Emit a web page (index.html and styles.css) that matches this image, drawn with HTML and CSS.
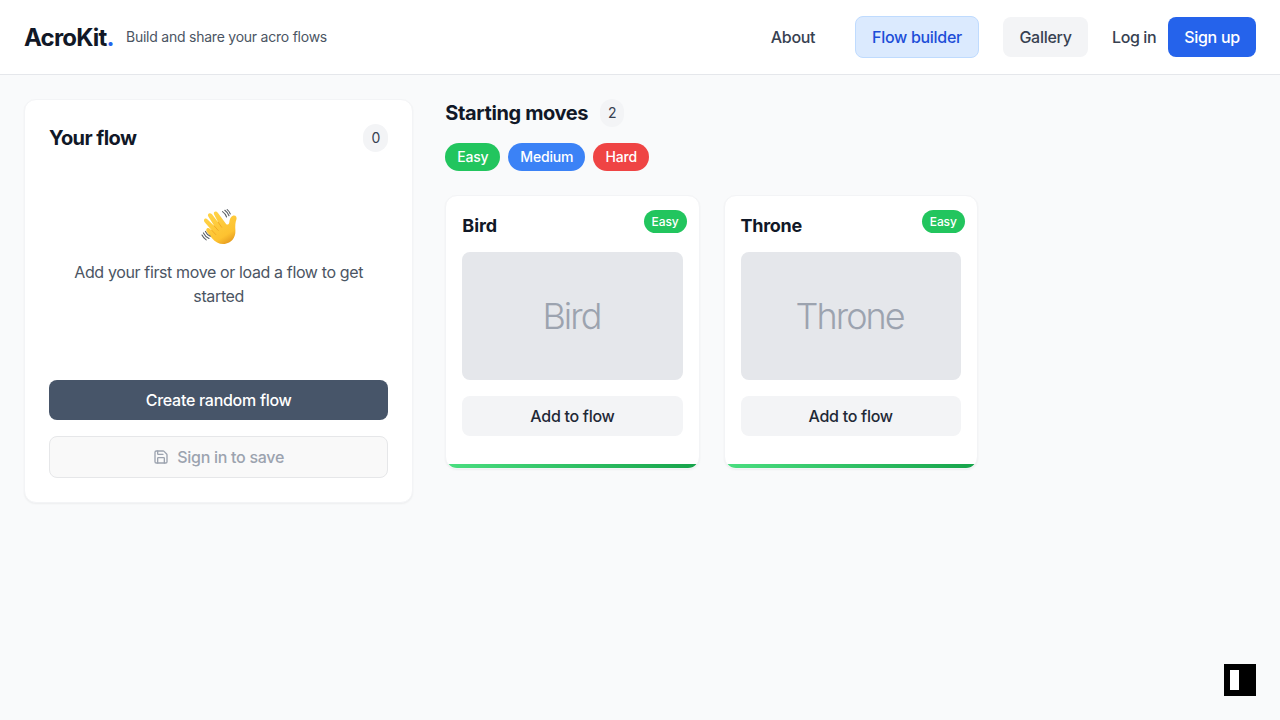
FILE: index.html
```html
<!DOCTYPE html>
<html lang="en">
<head>
<meta charset="utf-8">
<title>AcroKit</title>
<link rel="stylesheet" href="styles.css">
</head>
<body>
<header class="header">
  <div class="brand">
    <div class="logo"><span class="logo-name">AcroKit</span><span class="logo-dot">.</span></div>
    <div class="tagline">Build and share your acro flows</div>
  </div>
  <nav class="nav">
    <a class="nav-link about"><span>About</span></a>
    <a class="nav-link active"><span>Flow builder</span></a>
    <a class="nav-link gallery"><span>Gallery</span></a>
    <div class="account">
      <a class="login">Log in</a>
      <a class="signup"><span>Sign up</span></a>
    </div>
  </nav>
</header>
<main class="layout">
  <section class="panel">
    <div class="panel-head"><h2 class="heading flow-title">Your flow</h2><span class="count">0</span></div>
    <div class="empty">
      <svg class="wave" width="40" height="40" viewBox="0 0 40 40">
        <defs>
          <linearGradient id="skin" gradientUnits="userSpaceOnUse" x1="12" y1="8" x2="31" y2="38">
            <stop offset="0" stop-color="#ffd246"/><stop offset=".7" stop-color="#fdc230"/><stop offset="1" stop-color="#e0921c"/>
          </linearGradient>
        </defs>
        <path d="M13 31.2 7.9 24.9C6.1 22.6 8.4 19.8 10.8 21.7L12.9 23.4 5.7 15.2C3.7 12.7 6.3 10.3 8.6 12.4L15.3 19 9.3 9.6C7.8 6.8 10.9 4.9 13 7.3L19.3 15.4 15.1 7.6C13.8 4.8 17 3.3 18.8 5.7L27.3 17.2C28.7 18.3 30.1 17 30.3 15.2 30.6 12.1 31.7 9.2 34.3 8.5 36.8 7.9 38.2 10.3 37.4 12.6 36.3 15.6 36.1 18.7 36.4 23.6 36.8 31 32.1 36.2 25.8 36.9 20.7 37.5 16.5 35.2 13 31.2Z" fill="url(#skin)"/>
        <path d="m12.9 23.4 3.9 4.2M15.3 19l4 4.5M19.3 15.4l3.4 4.9" fill="none" stroke="#eda222" stroke-width=".8" stroke-linecap="round"/>
        <path d="M23.5 4.6c2 1.3 3.4 3.2 4.1 5.4M25.8 3.3c2 1.4 3.4 3.2 4.2 5.4M28.2 2.6c1.4 1.1 2.5 2.6 3.1 4.4M6.4 24.4c1.1 2.2 2.8 3.9 4.9 4.9M4.4 25.9c1.3 2.5 3.2 4.5 5.6 5.6M3 28.1c1 2.1 2.4 3.7 4.2 4.8" fill="none" stroke="#5b6067" stroke-width="1.1" stroke-linecap="round"/>
      </svg>
      <p class="empty-text"><span class="line-one">Add your first move or load a flow to get</span><br><span class="line-two">started</span></p>
    </div>
    <button class="random"><span>Create random flow</span></button>
    <button class="save">
      <svg width="16" height="16" viewBox="0 0 24 24" fill="none" stroke="currentColor" stroke-width="2" stroke-linecap="round" stroke-linejoin="round"><path d="M15.2 3a2 2 0 0 1 1.4.6l3.8 3.8a2 2 0 0 1 .6 1.4V19a2 2 0 0 1-2 2H5a2 2 0 0 1-2-2V5a2 2 0 0 1 2-2z"/><path d="M17 21v-7a1 1 0 0 0-1-1H8a1 1 0 0 0-1 1v7M7 3v4a1 1 0 0 0 1 1h7"/></svg>
      <span>Sign in to save</span>
    </button>
  </section>
  <section class="moves">
    <div class="moves-head"><h2 class="heading moves-title">Starting moves</h2><span class="count two">2</span></div>
    <div class="filters"><span class="pill easy">Easy</span><span class="pill medium">Medium</span><span class="pill hard">Hard</span></div>
    <div class="cards">
      <article class="card">
        <h3 class="card-title">Bird</h3><span class="badge">Easy</span>
        <div class="preview">Bird</div>
        <button class="add"><span>Add to flow</span></button>
      </article>
      <article class="card">
        <h3 class="card-title throne">Throne</h3><span class="badge">Easy</span>
        <div class="preview">Throne</div>
        <button class="add"><span>Add to flow</span></button>
      </article>
    </div>
  </section>
</main>
<div class="widget"><span class="widget-bar"></span></div>
</body>
</html>
```
FILE: styles.css
```css
* { box-sizing: border-box; }
body { margin: 0; min-height: 720px; background: #f9fafb; color: #111827; font: 400 16px/24px Inter, "Liberation Sans", sans-serif; }
h2, h3, p { margin: 0; }
button { display: flex; align-items: center; justify-content: center; width: 100%; border: 0; border-radius: 8px; font: inherit; font-weight: 500; letter-spacing: -.28px; padding: 0; }
.header { display: flex; align-items: center; justify-content: space-between; height: 75px; padding: 0 24px; background: #fff; border-bottom: 1px solid #e5e7eb; }
.brand { display: flex; align-items: center; gap: 12px; white-space: nowrap; }
.logo { width: 90px; padding-top: 2px; font-size: 24px; line-height: 32px; font-weight: 700; letter-spacing: -.8px; color: #111827; }
.logo-dot { color: #2563eb; }
.tagline { font-size: 14px; line-height: 20px; letter-spacing: -.235px; color: #4b5563; }
.nav { display: flex; align-items: center; gap: 24px; font-weight: 500; letter-spacing: -.28px; color: #374151; white-space: nowrap; }
.nav-link { display: flex; align-items: center; justify-content: center; height: 40px; border-radius: 8px; }
.about { width: 76px; }
.active { width: 124px; height: 42px; background: #dbeafe; border: 1px solid #bfdbfe; color: #1d4ed8; letter-spacing: -.3px; }
.gallery { width: 85px; background: #f3f4f6; }
.account { display: flex; align-items: center; gap: 12px; }
.login { width: 44px; letter-spacing: -.38px; }
.signup { display: flex; align-items: center; justify-content: center; width: 88px; height: 40px; border-radius: 8px; background: #2563eb; color: #fff; }
.layout { display: grid; grid-template-columns: repeat(3, 1fr); gap: 32px; padding: 24px; align-items: start; }
.layout > * { min-width: 0; }
.moves { grid-column: span 2; }
.panel { height: 404px; padding: 24px; background: #fff; border: 1px solid #f3f4f6; border-radius: 12px; box-shadow: 0 1px 2px rgba(0,0,0,.05); }
.panel-head { display: flex; align-items: center; justify-content: space-between; }
.heading { font-size: 20px; line-height: 28px; font-weight: 700; letter-spacing: -.38px; white-space: nowrap; }
.flow-title { letter-spacing: -.55px; }
.count { width: 25px; height: 28px; border-radius: 14px; background: #f3f4f6; color: #374151; font-size: 14px; line-height: 28px; text-align: center; }
.empty { height: 228px; padding-top: 55px; text-align: center; color: #4b5563; }
.wave { display: block; margin: 0 auto 13px; }
.empty-text { letter-spacing: -.37px; white-space: nowrap; }
.random { height: 40px; background: #475569; color: #fff; }
.save { gap: 8px; height: 42px; margin-top: 16px; background: #f9f9f9; border: 1px solid #e6e7e9; color: #9ca3af; }
.moves-head { display: flex; align-items: center; gap: 12px; }
.two { width: 24px; }
.filters { display: flex; gap: 8px; margin: 16px 0 24px; }
.pill { height: 28px; border-radius: 14px; color: #fff; font-size: 14px; line-height: 28px; font-weight: 500; letter-spacing: -.15px; text-align: center; }
.easy { width: 55px; background: #22c55e; }
.medium { width: 77px; background: #3b82f6; }
.hard { width: 56px; background: #ef4444; }
.cards { display: grid; grid-template-columns: repeat(3, 1fr); gap: 24px; }
.card { position: relative; height: 274px; padding: 16px; overflow: hidden; background: #fff; border: 1px solid #f3f4f6; border-radius: 12px; box-shadow: 0 1px 2px rgba(0,0,0,.05); }
.card::after { content: ""; position: absolute; inset: auto 0 0; height: 4px; background: linear-gradient(90deg, #4ade80, #16a34a); }
.card-title { font-size: 18px; line-height: 28px; font-weight: 700; letter-spacing: -.1px; }
.throne { letter-spacing: -.3px; }
.badge { position: absolute; top: 14px; right: 12px; width: 43px; height: 23px; border-radius: 12px; background: #22c55e; color: #fff; font-size: 12px; line-height: 23px; font-weight: 500; letter-spacing: -.1px; text-align: center; }
.preview { display: flex; align-items: center; justify-content: center; height: 128px; margin: 12px 0 16px; padding-right: 2px; border-radius: 8px; background: #e5e7eb; color: #9ca3af; font-size: 36px; font-weight: 300; letter-spacing: -1.95px; }
.add { height: 40px; background: #f3f4f6; color: #1f2937; }
.widget { position: fixed; right: 24px; bottom: 24px; width: 32px; height: 32px; padding: 6px; background: #000; }
.widget-bar { display: block; width: 9px; height: 20px; background: #fff; }
```
